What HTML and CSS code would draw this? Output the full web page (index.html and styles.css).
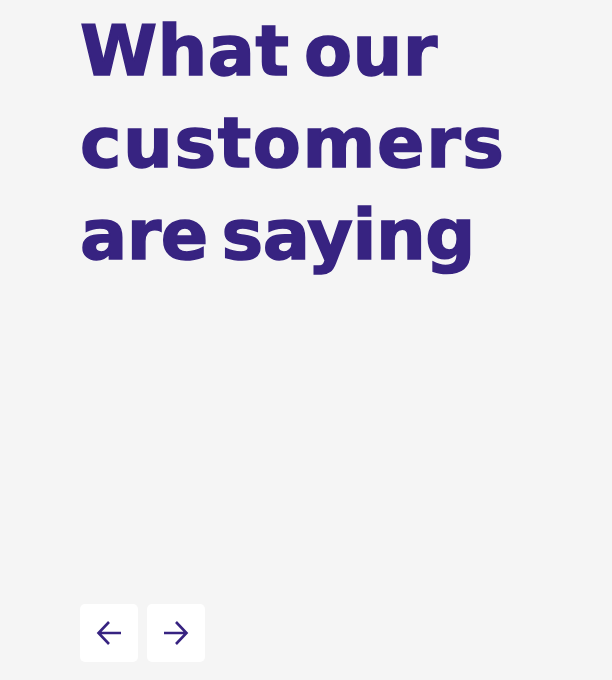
FILE: index.html
```html
<!DOCTYPE html>
<html lang="en">
<head>
<meta charset="utf-8">
<link rel="stylesheet" href="styles.css">
</head>
<body>
<section class="testimonials">
  <h2 class="title"><span class="first">What our</span> <span class="wide">customers</span> are saying</h2>
  <div class="nav">
    <button class="nav-btn" aria-label="Previous">
      <svg width="26" height="26" viewBox="0 0 26 26" fill="none" stroke="currentColor" stroke-width="2.6" stroke-linecap="butt" stroke-linejoin="miter"><path d="M25 13H3M13 2L2.5 13L13 24"/></svg>
    </button>
    <button class="nav-btn" aria-label="Next">
      <svg width="26" height="26" viewBox="0 0 26 26" fill="none" stroke="currentColor" stroke-width="2.6" stroke-linecap="butt" stroke-linejoin="miter"><path d="M1 13h22M13 2L23.5 13L13 24"/></svg>
    </button>
  </div>
</section>
</body>
</html>
```
FILE: styles.css
```css
html, body {
  margin: 0;
  padding: 0;
  background: #f5f5f5;
}
.testimonials {
  width: 612px;
  height: 680px;
  box-sizing: border-box;
  padding: 0 0 0 80px;
  display: flex;
  flex-direction: column;
}
.title {
  margin: 0;
  padding-top: 5px;
  width: 460px;
  font-family: "DejaVu Sans", sans-serif;
  font-weight: 700;
  font-size: 70px;
  line-height: 92px;
  letter-spacing: -0.5px;
  word-spacing: -10px;
  color: #372381;
  -webkit-text-stroke: 1.5px #372381;
}
.first {
  letter-spacing: 0.4px;
}
.wide {
  letter-spacing: 1.6px;
}
.nav {
  margin-top: auto;
  margin-bottom: 18px;
  display: flex;
  gap: 9px;
}
.nav-btn {
  width: 58px;
  height: 58px;
  border: none;
  border-radius: 5px;
  background: #ffffff;
  color: #372381;
  padding: 0;
  display: flex;
  align-items: center;
  justify-content: center;
}
```
